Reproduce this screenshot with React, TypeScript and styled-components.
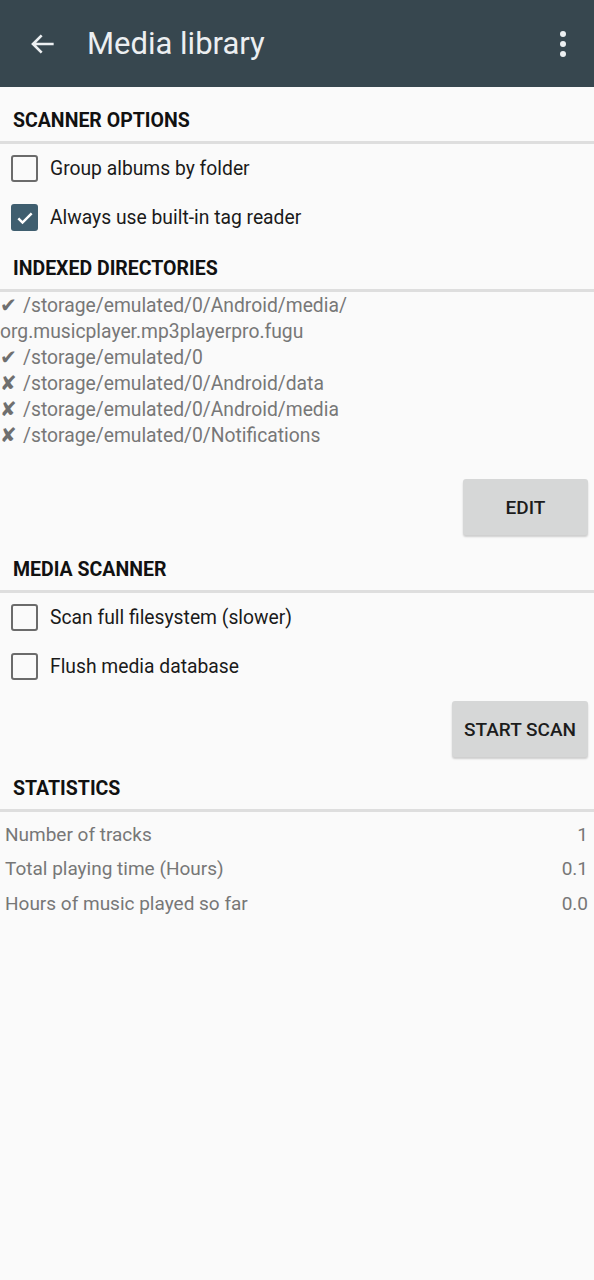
import styled, { createGlobalStyle } from "styled-components";

const GlobalStyle = createGlobalStyle`
  html, body {
    margin: 0;
    padding: 0;
    background: #fafafa;
    font-family: Roboto, "Noto Sans", sans-serif;
  }
`;

const Page = styled.div`
  width: 594px;
  min-height: 1280px;
  background: #fafafa;
`;

const AppBar = styled.header`
  height: 87px;
  background: #37474f;
  display: flex;
  align-items: center;
  padding: 0 26px 0 27px;
  box-sizing: border-box;
  color: #eceff1;
`;

const Title = styled.h1`
  margin: 0 0 0 28px;
  font-size: 31px;
  font-weight: 400;
  flex: 1;
`;

const IconButton = styled.div`
  display: flex;
  align-items: center;
  justify-content: center;
`;

const SectionTitle = styled.div<{ $first?: boolean }>`
  margin-top: ${(p) => (p.$first ? 7 : 0)}px;
  padding: 5px 13px 0;
  height: 50px;
  display: flex;
  align-items: center;
  box-sizing: border-box;
  font-size: 19.5px;
  font-weight: 700;
  color: #111;
  border-bottom: 3px solid #dedede;
`;

const Options = styled.div`
  padding-left: 11px;
`;

const CheckRow = styled.label`
  display: flex;
  align-items: center;
  height: 49px;
  font-size: 19.3px;
  color: #1a1a1a;
`;

const Box = styled.span<{ $checked?: boolean }>`
  width: 27px;
  height: 27px;
  box-sizing: border-box;
  border-radius: 3px;
  margin-right: 12px;
  display: flex;
  align-items: center;
  justify-content: center;
  border: ${(p) => (p.$checked ? "none" : "2.5px solid #6b6b6b")};
  background: ${(p) => (p.$checked ? "#3f5e6f" : "transparent")};
`;

const DirRow = styled.div`
  height: 26px;
  display: flex;
  align-items: center;
  font-size: 19.3px;
  color: #777;
  white-space: nowrap;
`;

const Mark = styled.span`
  width: 23px;
  color: #6f6f6f;
  font-family: "DejaVu Sans", sans-serif;
  font-size: 20px;
  line-height: 1;
`;

const ButtonRow = styled.div<{ $top: number; $bottom: number }>`
  display: flex;
  justify-content: flex-end;
  padding: ${(p) => p.$top}px 6px ${(p) => p.$bottom}px 0;
`;

const Button = styled.button`
  height: 56px;
  padding: 0 12px;
  min-width: 125px;
  border: none;
  border-radius: 3px;
  background: #d6d7d7;
  box-shadow: 0 2px 2px rgba(0, 0, 0, 0.18);
  font-family: Roboto, sans-serif;
  font-size: 19px;
  font-weight: 500;
  color: #1c1c1c;
`;

const Stats = styled.div`
  padding-top: 5px;
`;

const StatRow = styled.div`
  display: flex;
  justify-content: space-between;
  padding: 0 6px 0 5px;
  height: 34.5px;
  align-items: center;
  font-size: 19px;
  color: #777;
`;

const Check = ({ checked, label }: { checked?: boolean; label: string }) => (
  <CheckRow>
    <Box $checked={checked}>
      {checked && (
        <svg width="20" height="20" viewBox="0 0 24 24">
          <path d="M4 12.5l5 5L20 6.5" stroke="#fff" strokeWidth="3" fill="none" />
        </svg>
      )}
    </Box>
    {label}
  </CheckRow>
);

const dirs: [boolean, string][] = [
  [true, "/storage/emulated/0"],
  [false, "/storage/emulated/0/Android/data"],
  [false, "/storage/emulated/0/Android/media"],
  [false, "/storage/emulated/0/Notifications"],
];

const stats = [
  ["Number of tracks", "1"],
  ["Total playing time (Hours)", "0.1"],
  ["Hours of music played so far", "0.0"],
];

export default function App() {
  return (
    <Page>
      <GlobalStyle />
      <AppBar>
        <IconButton>
          <svg width="32" height="32" viewBox="0 0 24 24">
            <path d="M20 12H4.5M11 5.5L4.5 12l6.5 6.5" stroke="#eceff1" strokeWidth="2" fill="none" />
          </svg>
        </IconButton>
        <Title>Media library</Title>
        <IconButton>
          <svg width="10" height="28" viewBox="0 0 10 28">
            <circle cx="5" cy="4" r="3" fill="#eceff1" />
            <circle cx="5" cy="14" r="3" fill="#eceff1" />
            <circle cx="5" cy="24" r="3" fill="#eceff1" />
          </svg>
        </IconButton>
      </AppBar>

      <SectionTitle $first>SCANNER OPTIONS</SectionTitle>
      <Options>
        <Check label="Group albums by folder" />
        <Check checked label="Always use built-in tag reader" />
      </Options>

      <SectionTitle>INDEXED DIRECTORIES</SectionTitle>
      <div>
        <DirRow>
          <Mark>✔</Mark>
          /storage/emulated/0/Android/media/
        </DirRow>
        <DirRow>org.musicplayer.mp3playerpro.fugu</DirRow>
        {dirs.map(([ok, path]) => (
          <DirRow key={path}>
            <Mark>{ok ? "✔" : "✘"}</Mark>
            {path}
          </DirRow>
        ))}
      </div>
      <ButtonRow $top={31} $bottom={8}>
        <Button>EDIT</Button>
      </ButtonRow>

      <SectionTitle>MEDIA SCANNER</SectionTitle>
      <Options>
        <Check label="Scan full filesystem (slower)" />
        <Check label="Flush media database" />
      </Options>
      <ButtonRow $top={10} $bottom={5}>
        <Button>START SCAN</Button>
      </ButtonRow>

      <SectionTitle>STATISTICS</SectionTitle>
      <Stats>
        {stats.map(([label, value]) => (
          <StatRow key={label}>
            <span>{label}</span>
            <span>{value}</span>
          </StatRow>
        ))}
      </Stats>
    </Page>
  );
}
